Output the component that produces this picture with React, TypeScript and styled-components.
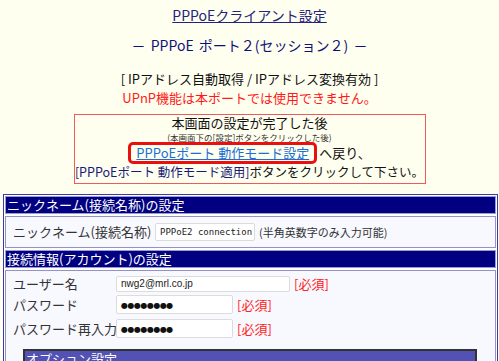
import styled, { createGlobalStyle } from "styled-components";

const Global = createGlobalStyle`
  html, body {
    margin: 0;
    padding: 0;
    background: #fffff0;
    font-family: "Noto Sans CJK JP", "DejaVu Sans", sans-serif;
    overflow: hidden;
  }
`;

const Page = styled.div`
  width: 499px;
  height: 361px;
  overflow: hidden;
  display: flex;
  flex-direction: column;
  align-items: center;
`;

const Title = styled.a`
  margin-top: 6px;
  font-size: 14px;
  line-height: 18px;
  height: 18px;
  color: #23237d;
  text-decoration: underline;
`;

const SubTitle = styled.div`
  margin-top: 12px;
  font-size: 14px;
  line-height: 18px;
  height: 18px;
  color: #10107a;
  word-spacing: 2px;
`;

const Notice = styled.div`
  margin-top: 16px;
  font-size: 13px;
  line-height: 18px;
  height: 18px;
  color: #111;
  white-space: nowrap;
`;

const Warn = styled.div`
  margin-top: 1px;
  font-size: 13px;
  line-height: 18px;
  height: 18px;
  color: #ff1a1a;
  white-space: nowrap;
`;

const InfoBox = styled.div`
  margin-top: 7px;
  width: 350px;
  border: 1px solid #f05a5a;
  display: flex;
  flex-direction: column;
  align-items: center;
  padding: 0 0 3px;
  color: #111;
  white-space: nowrap;
`;

const InfoLine = styled.div<{ $size?: number }>`
  font-size: ${(p) => p.$size ?? 13}px;
  line-height: 16px;
  height: 16px;
`;

const InfoSmall = styled.div`
  font-size: 8.5px;
  line-height: 10px;
  height: 10px;
  margin: 1px 0 0;
  color: #333;
`;

const LinkRow = styled.div`
  display: flex;
  align-items: center;
  font-size: 13px;
  line-height: 16px;
  height: 22px;
`;

const Highlight = styled.span`
  border: 3px solid #e81010;
  border-radius: 5px;
  padding: 0 5px;
  height: 16px;
  line-height: 16px;
  margin-right: 2px;
`;

const BlueLink = styled.a`
  color: #1a6fd6;
  text-decoration: underline;
`;

const Navy = styled.span`
  color: #1a1a7a;
`;

const Frame = styled.div`
  margin-top: 10px;
  align-self: stretch;
  margin-left: 3px;
  margin-right: 1px;
  border: 1px solid #3a3ab0;
  padding: 1px;
  display: flex;
  flex-direction: column;
  gap: 2px;
`;

const SectionHead = styled.div<{ $tone?: "navy" | "violet" }>`
  background: ${(p) => (p.$tone === "violet" ? "#5252b4" : "#000080")};
  border: 1px solid ${(p) => (p.$tone === "violet" ? "#333" : "#9a9ad6")};
  color: #fff;
  font-size: 13px;
  line-height: 16px;
  height: 16px;
  padding-left: 1px;
  white-space: nowrap;
`;

const SectionBody = styled.div<{ $pad: string }>`
  background: #f8f8ff;
  border: 1px solid #9292d0;
  padding: ${(p) => p.$pad};
  display: flex;
  flex-direction: column;
`;

const Row = styled.div<{ $labelWidth?: number; $h: number; $gap?: number }>`
  display: grid;
  grid-template-columns: ${(p) => p.$labelWidth ?? 102}px auto 1fr;
  align-items: center;
  height: ${(p) => p.$h}px;
  margin-top: ${(p) => p.$gap ?? 0}px;
  column-gap: 4px;
  font-size: 13px;
  color: #333;
  white-space: nowrap;
`;

const Label = styled.span`
  padding-left: 3px;
`;

const Field = styled.div<{ $w: number; $h: number; $mono?: boolean }>`
  width: ${(p) => p.$w}px;
  height: ${(p) => p.$h}px;
  box-sizing: border-box;
  border: 1px solid #dcdcdc;
  border-radius: 2px;
  background: #fff;
  padding-left: 4px;
  font-family: ${(p) => (p.$mono ? '"DejaVu Sans Mono", monospace' : '"Liberation Sans", sans-serif')};
  font-size: ${(p) => (p.$mono ? 9 : 10)}px;
  line-height: ${(p) => p.$h - 2}px;
  color: #222;
  overflow: hidden;
  white-space: nowrap;
`;

const Dots = styled.span`
  font-family: "DejaVu Sans", sans-serif;
  font-size: 8px;
  letter-spacing: -0.5px;
  color: #111;
`;

const Hint = styled.span`
  font-size: 11px;
  color: #333;
`;

const Required = styled.span`
  font-size: 13px;
  color: #ff2020;
`;

const Options = styled.div`
  margin: 11px 18px 0 13px;
  border: 1px solid #333;
`;

export default function App() {
  return (
    <>
      <Global />
      <Page>
        <Title href="#">PPPoEクライアント設定</Title>
        <SubTitle>－ PPPoE ポート２(セッション２) －</SubTitle>
        <Notice>[ IPアドレス自動取得 / IPアドレス変換有効 ]</Notice>
        <Warn>UPnP機能は本ポートでは使用できません。</Warn>
        <InfoBox>
          <InfoLine>本画面の設定が完了した後</InfoLine>
          <InfoSmall>(本画面下の[設定]ボタンをクリックした後)</InfoSmall>
          <LinkRow>
            <Highlight>
              <BlueLink href="#">PPPoEポート 動作モード設定</BlueLink>
            </Highlight>
            へ戻り、
          </LinkRow>
          <InfoLine $size={12.5}>
            <Navy>[PPPoEポート 動作モード適用]</Navy>ボタンをクリックして下さい。
          </InfoLine>
        </InfoBox>
        <Frame>
          <SectionHead>ニックネーム(接続名称)の設定</SectionHead>
          <SectionBody $pad="5px 0 7px 4px">
            <Row $labelWidth={141} $h={18}>
              <Label>ニックネーム(接続名称)</Label>
              <Field $w={100} $h={18} $mono>PPPoE2 connection</Field>
              <Hint>(半角英数字のみ入力可能)</Hint>
            </Row>
          </SectionBody>
          <SectionHead>接続情報(アカウント)の設定</SectionHead>
          <SectionBody $pad="3px 0 0 4px">
            <Row $h={18}>
              <Label>ユーザー名</Label>
              <Field $w={174} $h={16}>nwg2@mrl.co.jp</Field>
              <Required>[必須]</Required>
            </Row>
            <Row $h={20} $gap={2}>
              <Label>パスワード</Label>
              <Field $w={117} $h={19}><Dots>●●●●●●●●</Dots></Field>
              <Required>[必須]</Required>
            </Row>
            <Row $h={20} $gap={4}>
              <Label>パスワード再入力</Label>
              <Field $w={117} $h={19}><Dots>●●●●●●●●</Dots></Field>
              <Required>[必須]</Required>
            </Row>
            <Options>
              <SectionHead $tone="violet">オプション設定</SectionHead>
            </Options>
          </SectionBody>
        </Frame>
      </Page>
    </>
  );
}
